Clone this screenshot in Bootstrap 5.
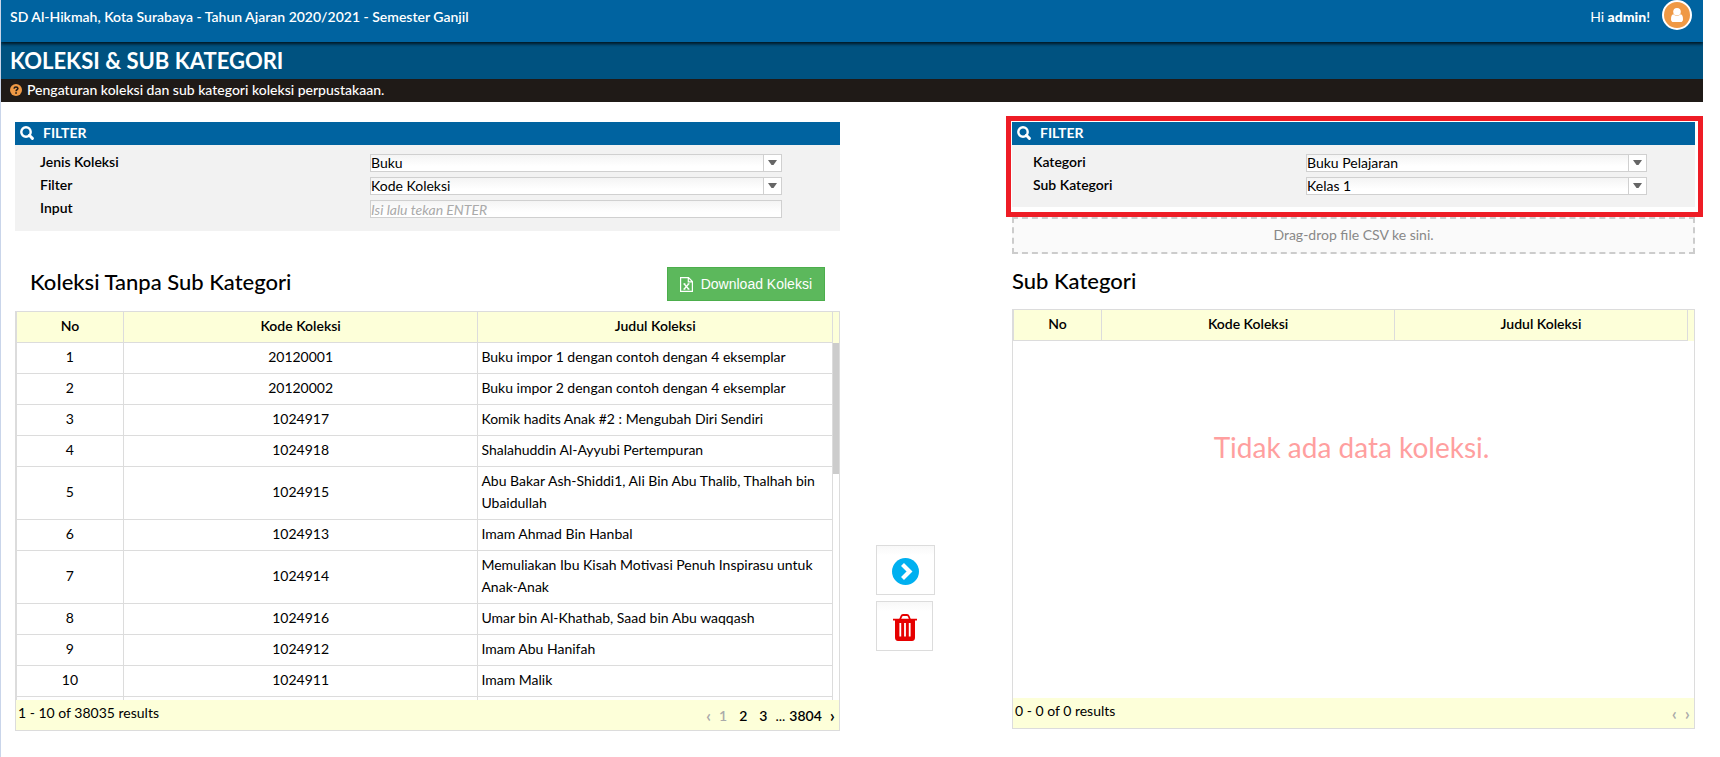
<!DOCTYPE html>
<html lang="id">
<head>
<meta charset="utf-8">
<meta name="viewport" content="width=device-width, initial-scale=1">
<title>Koleksi &amp; Sub Kategori</title>
<link href="https://cdn.jsdelivr.net/npm/bootstrap@5.3.0/dist/css/bootstrap.min.css" rel="stylesheet">
<style>
:root{--blue:#0063a0;--line:#dcdcdc;--cream:#fdffd9}
body{font-family:Lato,"Open Sans",sans-serif;font-size:14px;line-height:22px;color:#000;min-height:100vh;border-left:1px solid #c9d5ea;padding-right:17px;background:#fff}
.topbar{background:var(--blue);height:42px;color:#fff;padding:0 11px 0 9px;font-weight:600;position:relative;box-shadow:0 2px 3px rgba(0,0,0,.75);clip-path:inset(0 0 -5px 0)}
.topbar .school{padding-top:6px}
.avatar{width:30px;height:30px}
.titlebar{background:#005280;color:#fff;height:37px;padding:0 9px}
.titlebar h1{font-size:22px;line-height:38px;font-weight:700;margin:0}
.hint{background:#1f1a17;color:#fff;padding:0 9px 2px;height:23px;font-weight:500}
.hint span{margin-left:5px}
.board{display:grid;grid-template-columns:825fr 172fr 683fr;padding:20px 8px 0 14px}
.filter-head{background:var(--blue);color:#fff;height:23px;padding:0 4px 1px 5px;font-size:14px;line-height:22px;font-weight:700;margin:0;gap:9px}
.filter-body{background:#f2f2f2;padding:5px 0 12px;display:grid}
.left-pane .filter-body{grid-template-columns:330fr 412fr 58fr;padding-left:25px}
.right-pane .filter-body{grid-template-columns:273fr 341fr 48fr;padding-left:21px}
.right-pane .filter-body{padding-bottom:11px}
.filter-body label{font-weight:600;line-height:23px;height:23px;grid-column:1}
.filter-body .field{grid-column:2;height:23px;padding-top:4px}
.filter-body select,.filter-body input{display:block;width:100%;height:18px;border:1px solid #d0d0d0;border-radius:0;padding:0;font-size:14px;line-height:16px;color:#000;appearance:none;outline:0;background:linear-gradient(#f4f4f4,#fff 70%)}
.filter-body select{background:url("data:image/svg+xml,%3Csvg xmlns='http://www.w3.org/2000/svg' width='18' height='16'%3E%3Cpath fill='%23fff' d='M0 0h18v16H0z'/%3E%3Cpath fill='%23d0d0d0' d='M0 0h1v16H0z'/%3E%3Cpath fill='%23666' d='M5 5h9l-3.5 5h-2z'/%3E%3C/svg%3E") right top no-repeat,linear-gradient(#f4f4f4,#fff 70%)}
.filter-body input::placeholder{color:#aaa;font-style:italic;opacity:1}
.spot{position:relative}
.spot::after{content:"";position:absolute;inset:-6px -8px -10px -6px;border:5px solid #ee1c25;pointer-events:none}
.dropzone{margin-top:10px;height:37px;line-height:31px;border:2px dashed #ccc;background:#fafafa;color:#888;text-align:center}
h2{font-size:22px;line-height:30px;font-weight:500;margin:0}
.left-head{height:80px;padding:36px 15px 0}
.right-head{height:55px;padding-top:12px}
.btn-export{background:#5cb85c;border:1px solid #4cae4c;color:#fff;border-radius:0;height:34px;padding:0 12px;font:14px/20px "Liberation Sans",Arial,sans-serif}
.gridbox{border:1px solid var(--line)}
.viewport{height:388px;overflow:hidden}
.data{width:100%;table-layout:fixed;border-collapse:separate;border-spacing:0}
.data th,.data td{border:solid var(--line);border-width:0 1px 1px 0;padding:3px 3px 5px;text-align:center;color:#000}
.data th:first-child,.data td:first-child{border-left-width:1px}
.data td:last-child{text-align:left}
.data th{background:var(--cream);font-weight:600}
.data .filler{height:31px}
.rail{width:6px;background:#fff}
.rail-head{height:31px;background:var(--cream)}
.thumb{height:131px;background:#ccc}
.foot{background:var(--cream);height:30px;padding:0 4px 0 2px}
.foot nav{padding-top:5px}
.foot a{color:#000;text-decoration:none;font-weight:600}
.foot .off{color:#aaa;font-weight:600}
.foot .step{font-size:18px;line-height:20px}
.empty{font-size:28px;line-height:36px;color:#ff9f9f;text-align:center;padding:88px 4px 0 0}
.act{border:1px solid #dcdcdc;background:linear-gradient(#f8f8f8,#fff 20%);height:50px;width:59px;padding:3px 0 0;display:grid;place-items:center}
.act.trash{width:57px}
.moves{padding:423px 0 0 36px;display:grid;align-content:start;gap:6px}
</style>
</head>
<body>
<header class="topbar d-flex justify-content-between">
  <div class="school">SD Al-Hikmah, Kota Surabaya - Tahun Ajaran 2020/2021 - Semester Ganjil</div>
  <div class="d-flex"><span class="school me-2 pe-1"><span class="fw-normal">Hi</span> <b>admin</b>!</span>
    <svg class="avatar" viewBox="0 0 30 30" role="img" aria-label="admin"><circle cx="15" cy="15" r="14" fill="#ef9945" stroke="#fff" stroke-width="2"/><circle cx="15" cy="11.800" r="3.800" fill="#fff"/><path d="M11.300 14.300q3.700 3.400 7.400 0 2.300.5 2.300 4.900 0 2.800-2.500 2.800h-7q-2.500 0-2.500-2.800 0-4.400 2.300-4.900z" fill="#fff"/></svg>
  </div>
</header>
<div class="titlebar"><h1>KOLEKSI &amp; SUB KATEGORI</h1></div>
<div class="hint d-flex align-items-center">
  <svg width="12" height="12" viewBox="0 0 12 12" aria-hidden="true"><circle cx="6" cy="6" r="6" fill="#ef9945"/><path d="M4 4.600Q4.300 3 6 3t1.900 1.400C8 5.700 6.200 5.700 6.100 7.200" fill="none" stroke="#1f1a17" stroke-width="1.600"/><path d="M5.200 8.200h1.700v1.500H5.200z" fill="#1f1a17"/></svg>
  <span>Pengaturan koleksi dan sub kategori koleksi perpustakaan.</span>
</div>

<main class="board">
  <section class="left-pane">
    <h3 class="filter-head d-flex align-items-center"><svg width="14" height="14" viewBox="0 0 14 14" aria-hidden="true"><circle cx="6" cy="6" r="4.700" fill="none" stroke="#fff" stroke-width="2.400"/><path d="M9.300 9.300l3.100 3.100" stroke="#fff" stroke-width="2.900" stroke-linecap="round"/></svg><span>FILTER</span></h3>
    <div class="filter-body">
      <label for="jenis">Jenis Koleksi</label><div class="field"><select id="jenis"><option>Buku</option></select></div>
      <label for="saring">Filter</label><div class="field"><select id="saring"><option>Kode Koleksi</option></select></div>
      <label for="kunci">Input</label><div class="field"><input id="kunci" type="text" placeholder="Isi lalu tekan ENTER"></div>
    </div>
    <div class="left-head d-flex justify-content-between align-items-start">
      <h2>Koleksi Tanpa Sub Kategori</h2>
      <button type="button" class="btn-export d-flex align-items-center gap-2"><svg width="13" height="15" viewBox="0 0 13 15" fill="none" stroke="#fff" aria-hidden="true"><path d="M.6.6h7.900l3.900 3.900v9.900H.6zM8.300.8v4h4" stroke-width="1.200"/><path d="M4 6.800l4.800 5.400M8.800 6.800L4 12.200" stroke-width="1.300"/><path d="M3.300 6.800h2.200M7.500 6.800h2.200M3.300 12.200h2.200M7.500 12.200h2.200" stroke-width=".8"/></svg>Download Koleksi</button>
    </div>
    <div class="gridbox">
      <div class="viewport d-flex">
        <div class="flex-grow-1">
        <table class="data">
          <colgroup><col style="width:13.2%"><col style="width:43.4%"><col style="width:43.4%"></colgroup>
          <thead><tr><th>No</th><th>Kode Koleksi</th><th>Judul Koleksi</th></tr></thead>
          <tbody>
            <tr><td>1</td><td>20120001</td><td>Buku impor 1 dengan contoh dengan 4 eksemplar</td></tr>
            <tr><td>2</td><td>20120002</td><td>Buku impor 2 dengan contoh dengan 4 eksemplar</td></tr>
            <tr><td>3</td><td>1024917</td><td>Komik hadits Anak #2 : Mengubah Diri Sendiri</td></tr>
            <tr><td>4</td><td>1024918</td><td>Shalahuddin Al-Ayyubi Pertempuran</td></tr>
            <tr><td>5</td><td>1024915</td><td>Abu Bakar Ash-Shiddi1, Ali Bin Abu Thalib, Thalhah bin Ubaidullah</td></tr>
            <tr><td>6</td><td>1024913</td><td>Imam Ahmad Bin Hanbal</td></tr>
            <tr><td>7</td><td>1024914</td><td>Memuliakan Ibu Kisah Motivasi Penuh Inspirasu untuk Anak-Anak</td></tr>
            <tr><td>8</td><td>1024916</td><td>Umar bin Al-Khathab, Saad bin Abu waqqash</td></tr>
            <tr><td>9</td><td>1024912</td><td>Imam Abu Hanifah</td></tr>
            <tr><td>10</td><td>1024911</td><td>Imam Malik</td></tr>
            <tr class="filler"><td></td><td></td><td></td></tr>
          </tbody>
        </table>
        </div>
        <div class="rail flex-shrink-0"><div class="rail-head"></div><div class="thumb"></div></div>
      </div>
      <div class="foot d-flex justify-content-between">
        <span class="pt-1 lh-sm">1 - 10 of 38035 results</span>
        <nav class="d-flex" aria-label="Halaman"><span class="off step me-2">‹</span><span class="off me-2 pe-1">1</span><a href="#" class="me-2 pe-1">2</a><a href="#" class="me-2">3</a><span class="me-1">...</span><a href="#" class="me-2">3804</a><a href="#" class="step">›</a></nav>
      </div>
    </div>
  </section>

  <div class="moves">
    <button type="button" class="act" aria-label="Pindahkan"><svg width="27" height="27" viewBox="0 0 27 27"><circle cx="13.500" cy="13.500" r="13.500" fill="#00b0f0"/><path d="M10.500 6.500l7 7-7 7" fill="none" stroke="#fff" stroke-width="4.200"/></svg></button>
    <button type="button" class="act trash" aria-label="Hapus"><svg width="24" height="27" viewBox="0 0 24 27"><path d="M7 5.500l1.300-3.200Q8.800 1 10 1h4q1.200 0 1.700 1.300L17 5.500" fill="none" stroke="#e60000" stroke-width="1.800"/><path d="M0 4.800h24v1.800h-2v17Q22 27 19 27H5q-3 0-3-3.400v-17H0z" fill="#e60000"/><path d="M7.300 9v13.500M12 9v13.500M16.700 9v13.500" stroke="#fff" stroke-width="1.800"/></svg></button>
  </div>

  <section class="right-pane">
    <div class="spot">
      <h3 class="filter-head d-flex align-items-center"><svg width="14" height="14" viewBox="0 0 14 14" aria-hidden="true"><circle cx="6" cy="6" r="4.700" fill="none" stroke="#fff" stroke-width="2.400"/><path d="M9.300 9.300l3.100 3.100" stroke="#fff" stroke-width="2.900" stroke-linecap="round"/></svg><span>FILTER</span></h3>
      <div class="filter-body">
        <label for="kategori">Kategori</label><div class="field"><select id="kategori"><option>Buku Pelajaran</option></select></div>
        <label for="sub">Sub Kategori</label><div class="field"><select id="sub"><option>Kelas 1</option></select></div>
      </div>
    </div>
    <div class="dropzone">Drag-drop file CSV ke sini.</div>
    <div class="right-head"><h2>Sub Kategori</h2></div>
    <div class="gridbox">
      <div class="viewport">
        <div class="d-flex">
          <table class="data">
            <colgroup><col style="width:13.2%"><col style="width:43.4%"><col style="width:43.4%"></colgroup>
            <thead><tr><th>No</th><th>Kode Koleksi</th><th>Judul Koleksi</th></tr></thead>
          </table>
          <div class="rail flex-shrink-0"><div class="rail-head"></div></div>
        </div>
        <div class="empty">Tidak ada data koleksi.</div>
      </div>
      <div class="foot d-flex justify-content-between">
        <span class="pt-1 lh-sm">0 - 0 of 0 results</span>
        <nav class="d-flex" aria-label="Halaman sub kategori"><span class="off step me-2">‹</span><span class="off step">›</span></nav>
      </div>
    </div>
  </section>
</main>
<script src="https://cdn.jsdelivr.net/npm/bootstrap@5.3.0/dist/js/bootstrap.bundle.min.js"></script>
</body>
</html>
